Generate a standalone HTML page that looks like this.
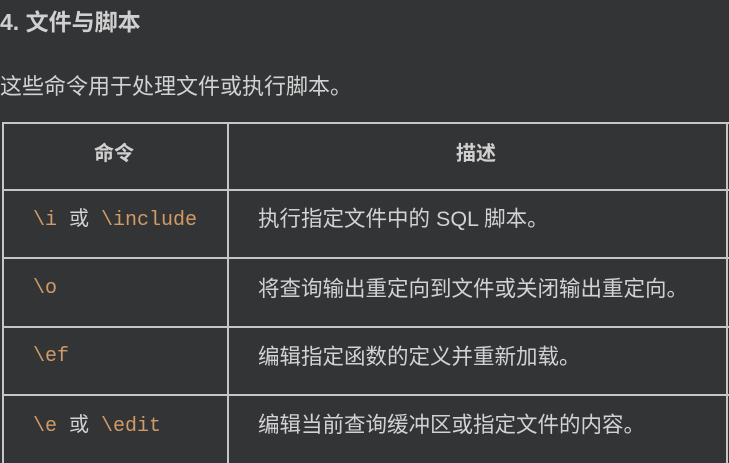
<!DOCTYPE html>
<html><head><meta charset="utf-8"><style>
body{margin:0;width:729px;height:460px;background:#333436;overflow:hidden;position:relative;font-family:"Liberation Sans","Noto Sans CJK SC",sans-serif;color:#d2d2d2}
.a{position:absolute;white-space:nowrap;line-height:24px}
.h{left:0;top:10px;font-size:23px;font-weight:bold;color:#d0d0d0}
.p{left:0;top:75px;font-size:22px}
.hl{position:absolute;left:2px;width:727px;height:2px;background:#c4c6c8}
.vl{position:absolute;top:123px;height:340px;width:2px;background:#c4c6c8}
.th{font-weight:bold;font-size:20px;color:#d0d0d0}
.c{font-family:"Liberation Mono","Noto Sans CJK SC",monospace;font-size:20px;color:#d29a66}
.c span{font-family:"Liberation Sans","Noto Sans CJK SC",sans-serif;color:#d2d2d2}
.d{font-size:21.5px;left:258px}
</style></head><body>
<div class="a h">4. 文件与脚本</div>
<div class="a p">这些命令用于处理文件或执行脚本。</div>
<div class="hl" style="top:122px"></div>
<div class="hl" style="top:189px"></div>
<div class="hl" style="top:257px"></div>
<div class="hl" style="top:326px"></div>
<div class="hl" style="top:394px"></div>
<div class="vl" style="left:2px"></div>
<div class="vl" style="left:227px"></div>
<div class="vl" style="left:726px"></div>
<div class="a th" style="left:94px;top:142px">命令</div>
<div class="a th" style="left:456px;top:142px">描述</div>
<div class="a c" style="left:33px;top:207px">\i <span>或</span> \include</div>
<div class="a d" style="top:207px">执行指定文件中的 SQL 脚本。</div>
<div class="a c" style="left:33px;top:277px">\o</div>
<div class="a d" style="top:277px">将查询输出重定向到文件或关闭输出重定向。</div>
<div class="a c" style="left:33px;top:345px">\ef</div>
<div class="a d" style="top:345px">编辑指定函数的定义并重新加载。</div>
<div class="a c" style="left:33px;top:413px">\e <span>或</span> \edit</div>
<div class="a d" style="top:413px">编辑当前查询缓冲区或指定文件的内容。</div>
</body></html>
